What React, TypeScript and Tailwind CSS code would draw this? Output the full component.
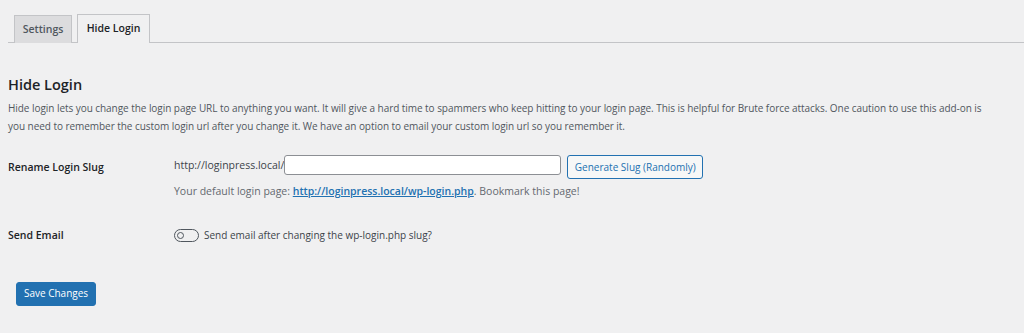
import React from "react";

export default function App() {
  return (
    <div className="w-[1024px] h-[333px] bg-[#f0f0f1] overflow-hidden text-[#3c434a]" style={{ fontFamily: '"Open Sans", "Noto Sans", sans-serif' }}>
      <div className="pt-[14px] pl-[8px]">
        <div className="flex items-end border-b border-[#c3c4c7] pl-[6px] gap-[5px] h-[29px]">
          <div className="h-[28px] w-[58px] flex items-center justify-center bg-[#dcdcde] border border-[#c3c4c7] border-b-0 text-[10.5px] font-semibold text-[#50575e] -mb-px">Settings</div>
          <div className="h-[29px] w-[73px] flex items-center justify-center bg-[#f0f0f1] border border-[#c3c4c7] border-b-0 text-[10.5px] font-semibold text-[#1d2327] -mb-px">Hide Login</div>
        </div>
        <h2 className="mt-[32px] text-[14.5px] font-semibold text-[#1d2327] leading-[20px]">Hide Login</h2>
        <p className="mt-[4px] text-[10px] tracking-[-0.05px] leading-[18px] text-[#50575e] pr-[40px]">
          Hide login lets you change the login page URL to anything you want. It will give a hard time to spammers who keep hitting to your login page. This is helpful for Brute force attacks. One caution to use this add-on is you need to remember the custom login url after you change it. We have an option to email your custom login url so you remember it.
        </p>
        <div className="mt-[20px] flex">
          <div className="w-[166px] pt-[3px] text-[10.5px] font-semibold text-[#1d2327] leading-[18px]">Rename Login Slug</div>
          <div>
            <div className="flex items-start">
              <span className="text-[10.5px] leading-[20px] text-[#3c434a]">http://loginpress.local/</span>
              <input className="w-[277px] h-[20px] bg-white border border-[#8c8f94] rounded-[3px] outline-none" />
              <button className="ml-[6px] h-[24px] w-[136px] border border-[#2271b1] rounded-[3px] bg-[#f6f7f7] text-[#2271b1] text-[10px]">Generate Slug (Randomly)</button>
            </div>
            <div className="mt-[3px] text-[10.5px] text-[#646970] leading-[18px]">
              Your default login page: <a className="text-[#2271b1] font-semibold underline" href="#">http://loginpress.local/wp-login.php</a>. Bookmark this page!
            </div>
          </div>
        </div>
        <div className="mt-[28px] flex items-center">
          <div className="w-[166px] text-[10.5px] font-semibold text-[#1d2327]">Send Email</div>
          <div className="flex items-center gap-[5px]">
            <div className="w-[25px] h-[13px] rounded-full border-[1.5px] border-[#50575e] flex items-center pl-[2px]">
              <div className="w-[7px] h-[7px] rounded-full border-[1.5px] border-[#50575e]" />
            </div>
            <span className="text-[10px] text-[#3c434a]">Send email after changing the wp-login.php slug?</span>
          </div>
        </div>
        <button className="mt-[38px] ml-[8px] h-[24px] w-[80px] bg-[#2271b1] text-white text-[10px] rounded-[3px] border border-[#2271b1]">Save Changes</button>
      </div>
    </div>
  );
}
